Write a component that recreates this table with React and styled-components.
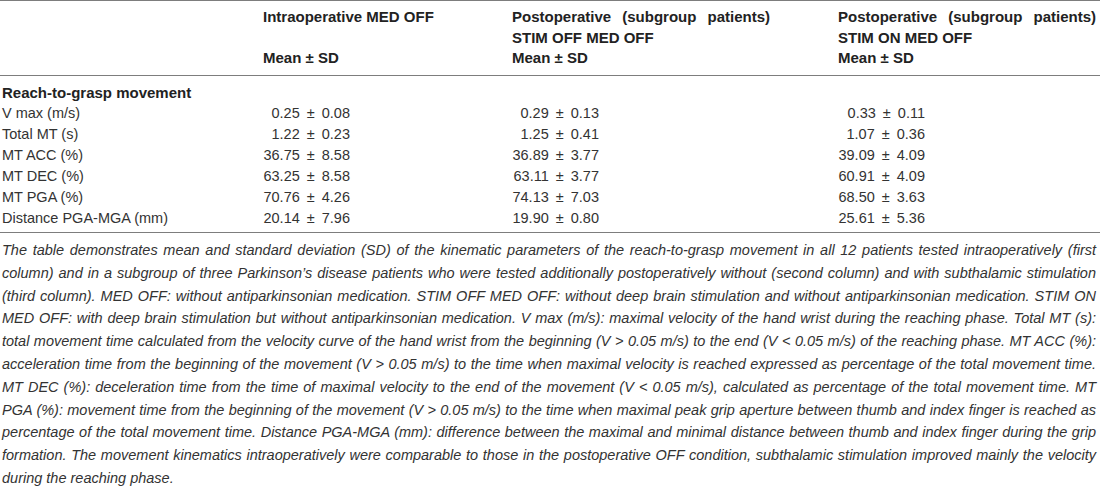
import React from 'react'
import styled, {createGlobalStyle} from 'styled-components'

const GlobalStyle = createGlobalStyle`
    body {
        margin: 0;
        background: #fff;
    }
`

const columns = [
    {title: 'Intraoperative MED OFF'},
    {title: 'Postoperative (subgroup patients) STIM OFF MED OFF'},
    {title: 'Postoperative (subgroup patients) STIM ON MED OFF'},
]

const rows = [
    ['V max (m/s)', '0.25 ± 0.08', '0.29 ± 0.13', '0.33 ± 0.11'],
    ['Total MT (s)', '1.22 ± 0.23', '1.25 ± 0.41', '1.07 ± 0.36'],
    ['MT ACC (%)', '36.75 ± 8.58', '36.89 ± 3.77', '39.09 ± 4.09'],
    ['MT DEC (%)', '63.25 ± 8.58', '63.11 ± 3.77', '60.91 ± 4.09'],
    ['MT PGA (%)', '70.76 ± 4.26', '74.13 ± 7.03', '68.50 ± 3.63'],
    ['Distance PGA-MGA (mm)', '20.14 ± 7.96', '19.90 ± 0.80', '25.61 ± 5.36'],
]

const captionLines = [
    'The table demonstrates mean and standard deviation (SD) of the kinematic parameters of the reach-to-grasp movement in all 12 patients tested intraoperatively (first',
    'column) and in a subgroup of three Parkinson’s disease patients who were tested additionally postoperatively without (second column) and with subthalamic stimulation',
    '(third column). MED OFF: without antiparkinsonian medication. STIM OFF MED OFF: without deep brain stimulation and without antiparkinsonian medication. STIM ON',
    'MED OFF: with deep brain stimulation but without antiparkinsonian medication. V max (m/s): maximal velocity of the hand wrist during the reaching phase. Total MT (s):',
    'total movement time calculated from the velocity curve of the hand wrist from the beginning (V > 0.05 m/s) to the end (V < 0.05 m/s) of the reaching phase. MT ACC (%):',
    'acceleration time from the beginning of the movement (V > 0.05 m/s) to the time when maximal velocity is reached expressed as percentage of the total movement time.',
    'MT DEC (%): deceleration time from the time of maximal velocity to the end of the movement (V < 0.05 m/s), calculated as percentage of the total movement time. MT',
    'PGA (%): movement time from the beginning of the movement (V > 0.05 m/s) to the time when maximal peak grip aperture between thumb and index finger is reached as',
    'percentage of the total movement time. Distance PGA-MGA (mm): difference between the maximal and minimal distance between thumb and index finger during the grip',
    'formation. The movement kinematics intraoperatively were comparable to those in the postoperative OFF condition, subthalamic stimulation improved mainly the velocity',
    'during the reaching phase.',
]

const App = () => {
    return (
        <Page>
            <GlobalStyle />
            <Table>
                <HeadCell />
                {columns.map(col => (
                    <HeadCell key={col.title}>
                        <HeadTitle>{col.title}</HeadTitle>
                        <HeadSub>Mean ± SD</HeadSub>
                    </HeadCell>
                ))}

                <Section>Reach-to-grasp movement</Section>
                {rows.map((row, i) => (
                    <React.Fragment key={row[0]}>
                        <Label $last={i === rows.length - 1}>{row[0]}</Label>
                        {row.slice(1).map((v, j) => (
                            <Cell key={j} $last={i === rows.length - 1}>
                                <Value>{v}</Value>
                            </Cell>
                        ))}
                    </React.Fragment>
                ))}
            </Table>
            <Caption>
                {captionLines.map((line, i) => (
                    <CaptionLine key={i} $last={i === captionLines.length - 1}>{line}</CaptionLine>
                ))}
            </Caption>
        </Page>
    )
}

export default App


const Page = styled.div`
    width: 1100px;
    font-family: "Liberation Sans", Arial, sans-serif;
    color: #333;
`
const Table = styled.div`
    display: grid;
    grid-template-columns: 263px 249px 326px 1fr;
    border-top: 1px solid #7d7d7d;
    border-bottom: 1px solid #7d7d7d;
`
const HeadCell = styled.div`
    display: flex;
    flex-direction: column;
    padding: 6px 0 6.5px;
    border-bottom: 1px solid #7d7d7d;
    font-size: 15px;
    font-weight: 700;
    line-height: 20.5px;
    color: #222;
`
const HeadTitle = styled.div`
    width: 258px;
    text-align: justify;
`
const HeadSub = styled.div`
    margin-top: auto;
`
const Section = styled.div`
    grid-column: 1 / -1;
    padding: 6px 0 0 2px;
    font-size: 15px;
    font-weight: 700;
    line-height: 21px;
    color: #222;
`
const Label = styled.div`
    padding-left: 2px;
    padding-bottom: ${p => p.$last ? '3px' : '0'};
    font-size: 14.5px;
    line-height: 21px;
`
const Cell = styled.div`
    padding-bottom: ${p => p.$last ? '3px' : '0'};
    font-size: 14.5px;
    line-height: 21px;
`
const Value = styled.span`
    display: block;
    width: 87px;
    text-align: right;
    word-spacing: 3px;
`
const Caption = styled.div`
    padding: 6px 4px 0 2px;
    font-size: 14.5px;
    font-style: italic;
    line-height: 22.8px;
    color: #333;
`
const CaptionLine = styled.div`
    text-align: ${p => p.$last ? 'left' : 'justify'};
    text-align-last: ${p => p.$last ? 'left' : 'justify'};
`
